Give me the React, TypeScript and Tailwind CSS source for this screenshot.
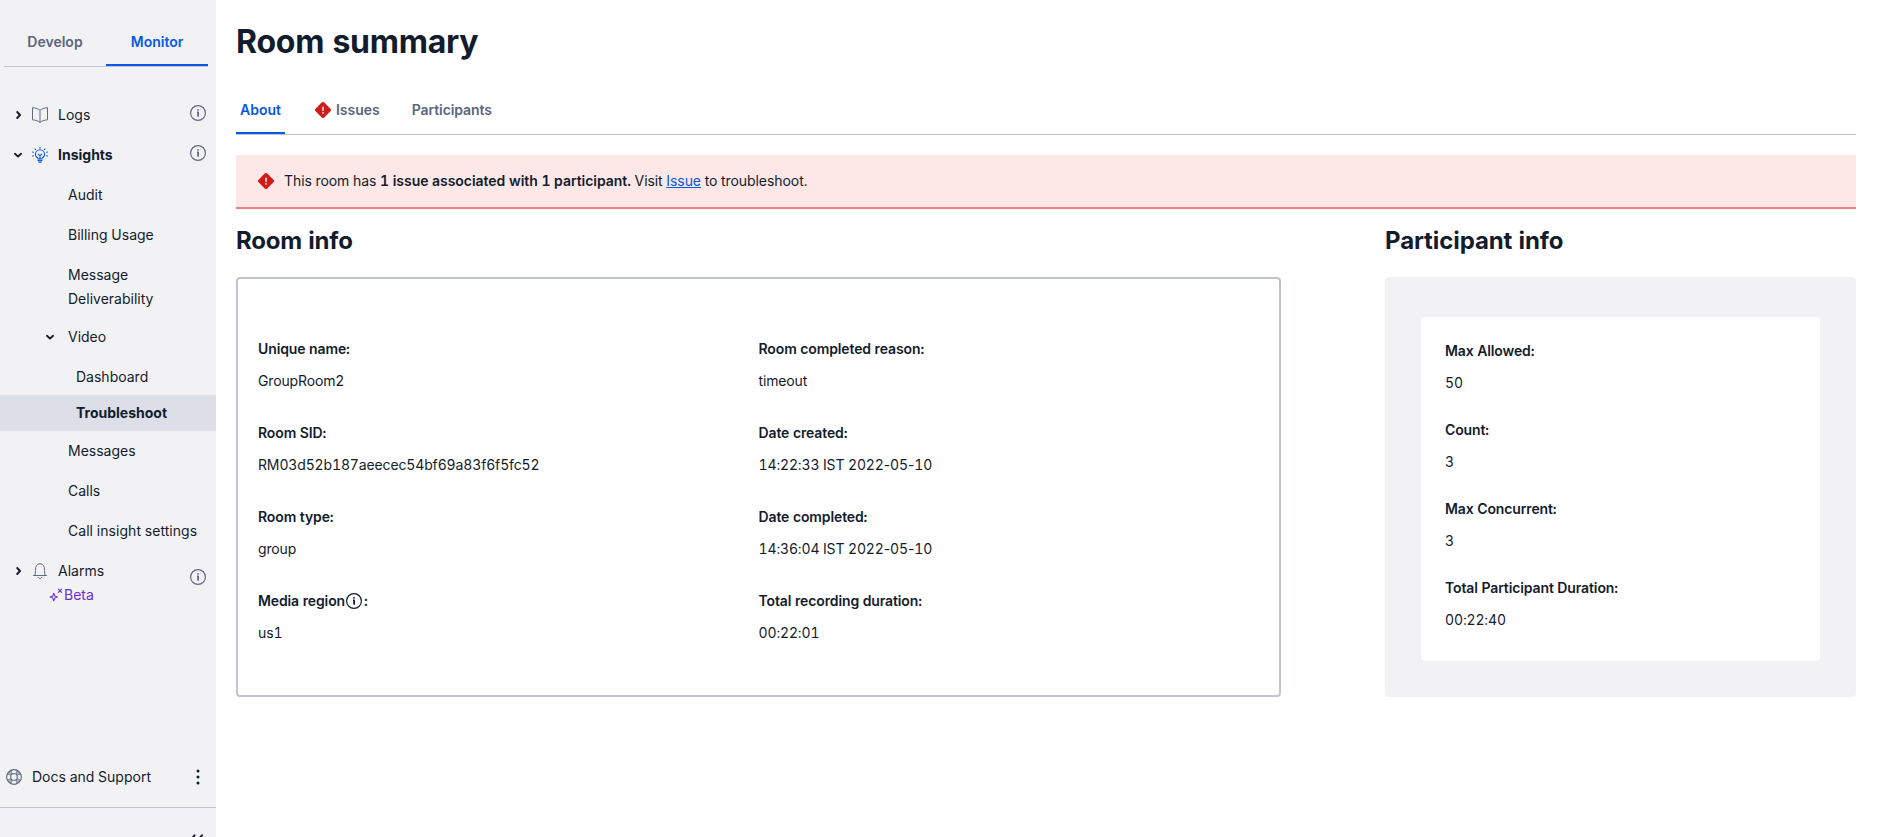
import React from "react";

type IconProps = { className?: string };

function InfoIcon({ className = "" }: IconProps) {
  return (
    <svg viewBox="0 0 16 16" className={`size-4 shrink-0 ${className}`} fill="none">
      <circle cx="8" cy="8" r="7.4" stroke="currentColor" strokeWidth="1.2" />
      <path d="M7 7.3h1.2V11.4" stroke="currentColor" strokeWidth="1.4" strokeLinejoin="round" />
      <path d="M8.2 7v4.5" stroke="currentColor" strokeWidth="1.5" />
      <circle cx="8" cy="4.9" r="0.9" fill="currentColor" />
    </svg>
  );
}

function ErrorIcon({ className = "" }: IconProps) {
  return (
    <svg viewBox="0 0 16 16" className={`size-4 shrink-0 ${className}`}>
      <path
        d="M6.7.6a1.9 1.9 0 0 1 2.6 0l6.1 6.1a1.9 1.9 0 0 1 0 2.6l-6.1 6.1a1.9 1.9 0 0 1-2.6 0L.6 9.3a1.9 1.9 0 0 1 0-2.6z"
        fill="#d01b1b"
      />
      <path d="M8 5.2v3.2" stroke="#fde8e7" strokeWidth="1.5" strokeLinecap="round" />
      <circle cx="8" cy="10.9" r="0.85" fill="#fde8e7" />
    </svg>
  );
}

function Chevron({ open }: { open?: boolean }) {
  return (
    <svg viewBox="0 0 10 10" className="size-2.5 shrink-0" fill="none" stroke="#121c2d" strokeWidth="1.9" strokeLinecap="round" strokeLinejoin="round">
      <path d={open ? "M2 3.8 5 6.6 8 3.8" : "M4.2 2 7 5 4.2 8"} />
    </svg>
  );
}

function BookIcon() {
  return (
    <svg viewBox="0 0 16 16" className="size-4 shrink-0" fill="none" stroke="#606b85" strokeWidth="1" strokeLinejoin="round">
      <path d="M8 3.4C6.6 1.9 3.6.9.5.6v12.2c3.1.3 6.1 1.2 7.5 2.7 1.4-1.5 4.4-2.4 7.5-2.7V.6C12.4.9 9.4 1.9 8 3.4zM8 3.4v12.1" />
    </svg>
  );
}

function BulbIcon() {
  return (
    <svg viewBox="0 0 16 16" className="size-4 shrink-0" fill="none" stroke="#0559e0" strokeWidth="1.1" strokeLinecap="round">
      <path d="M5.9 12V11C4.3 10.2 3.4 8.9 3.4 7.3a4.6 4.6 0 0 1 9.2 0c0 1.6-.9 2.9-2.5 3.7V12z" />
      <path d="M6 13.6h4M6.8 15.2h2.4M6.3 7.2 8 8.8l1.7-1.6M8 8.8V12" />
      <path d="M8 .5v.7M3 1.8l.6.7M13 1.8l-.6.7M.5 5l.8.2M15.5 5l-.8.2M.6 9l.8-.3M15.4 9l-.8-.3" />
    </svg>
  );
}

function BellIcon() {
  return (
    <svg viewBox="0 0 16 16" className="size-4 shrink-0" fill="none" stroke="#606b85" strokeWidth="1" strokeLinecap="round" strokeLinejoin="round">
      <path d="M1.5 12.5h13M2.9 12.3c.5-1.3.6-2.6.6-4.8C3.5 3.3 5 .8 8 .8s4.5 2.5 4.5 6.7c0 2.2.1 3.5.6 4.8M6.3 14.3c.2.8.9 1.2 1.7 1.2s1.5-.4 1.7-1.2" />
    </svg>
  );
}

function SparkleIcon() {
  return (
    <svg viewBox="0 0 14 14" className="size-3.5 shrink-0" fill="none" stroke="#6d2ed1" strokeWidth="1.1" strokeLinejoin="round" strokeLinecap="round">
      <path d="M4.8 5.2 5.8 8.1 8.3 9.1 5.8 10.1 4.8 12.8 3.8 10.1 1.1 9.1 3.8 8.1z" />
      <path d="M9.4 1.2l3.2 3.2M12.6 1.2 9.4 4.4" />
    </svg>
  );
}

function LifebuoyIcon() {
  return (
    <svg viewBox="0 0 16 16" className="size-4 shrink-0" fill="none" stroke="#5a6581" strokeWidth="1.1">
      <circle cx="8" cy="8" r="7.4" />
      <rect x="4.8" y="4.8" width="6.4" height="6.4" rx="2.2" />
      <path
        d="M3.2 3 5.2 1.4 6 5 5 6 1.4 5.200zM12.8 3 10.800 1.400 10 5l1 1 3.600-.8zM3.200 13l2 1.600L6 11l-1-1-3.600.8zM12.800 13l-2 1.600L10 11l1-1 3.600.8z"
        fill="#5a6581"
        fillOpacity="0.45"
        strokeWidth="0.6"
      />
    </svg>
  );
}

function Section({ icon, label, open, bold }: { icon: React.ReactNode; label: string; open?: boolean; bold?: boolean }) {
  return (
    <div className="flex h-10 items-center pr-[10px] pl-[13px]">
      <Chevron open={open} />
      <span className="ml-[9px] flex">{icon}</span>
      <span className={bold ? "ml-[10px] flex-1 font-bold" : "ml-[10px] flex-1"}>{label}</span>
      <InfoIcon className="mb-1 text-[#606b85]" />
    </div>
  );
}

function Item({ label }: { label: string }) {
  return <div className="w-[180px] py-2 pl-[68px]">{label}</div>;
}

// Digits are tabular, but hyphens keep their proportional width.
function Value({ text }: { text: string }) {
  return text.split("-").map((part, i) => (
    <React.Fragment key={i}>
      {i > 0 && <span className="normal-nums">-</span>}
      {part}
    </React.Fragment>
  ));
}

function Field({ label, value, info }: { label: string; value: string; info?: boolean }) {
  return (
    <div className="flex flex-col gap-3">
      <dt className="flex h-5 items-center font-semibold tracking-[-0.12px]">
        {label}
        {info && <InfoIcon className="mr-0.5 ml-px" />}
        {info ? <span>:</span> : null}
      </dt>
      <dd className="h-5 tracking-[-0.14px]">
        <Value text={value} />
      </dd>
    </div>
  );
}

const roomFields = [
  ["Unique name:", "GroupRoom2"],
  ["Room completed reason:", "timeout"],
  ["Room SID:", "RM03d52b187aeecec54bf69a83f6f5fc52"],
  ["Date created:", "14:22:33 IST 2022-05-10"],
  ["Room type:", "group"],
  ["Date completed:", "14:36:04 IST 2022-05-10"],
  ["Media region", "us1"],
  ["Total recording duration:", "00:22:01"],
];

const participantFields = [
  ["Max Allowed:", "50"],
  ["Count:", "3"],
  ["Max Concurrent:", "3"],
  ["Total Participant Duration:", "00:22:40"],
];

function Sidebar() {
  return (
    <aside className="flex h-full w-[216px] shrink-0 flex-col bg-[#f2f2f4] leading-6">
      <div className="mr-2 ml-1 flex h-[67px] border-b border-[#c1c4d6] text-center font-semibold">
        <div className="flex-1 pt-[30px] text-[#5a6581]">Develop</div>
        <div className="flex-1 border-b-2 border-[#0559e0] pt-[30px] text-[#0559e0]">Monitor</div>
      </div>
      <nav className="mt-7 flex-1">
        <Section icon={<BookIcon />} label="Logs" />
        <Section icon={<BulbIcon />} label="Insights" open bold />
        <Item label="Audit" />
        <Item label="Billing Usage" />
        <Item label="Message Deliverability" />
        <div className="flex h-9 items-center pl-[45px]">
          <Chevron open />
          <span className="ml-[13px]">Video</span>
        </div>
        <div className="mt-1 flex h-9 items-center pl-[76px]">Dashboard</div>
        <div className="flex h-9 items-center bg-[#dcdfe8] pl-[76px] font-bold">Troubleshoot</div>
        <Item label="Messages" />
        <Item label="Calls" />
        <div className="py-2 pl-[68px] tracking-[0.04px] whitespace-nowrap">Call insight settings</div>
        <div className="flex pt-2 pr-[10px] pl-[13px]">
          <div className="flex-1">
            <div className="flex h-6 items-center">
              <Chevron />
              <span className="ml-[9px] flex">
                <BellIcon />
              </span>
              <span className="ml-[10px]">Alarms</span>
            </div>
            <div className="flex h-6 items-center pl-9 text-[#6d2ed1]">
              <SparkleIcon />
              <span className="ml-px">Beta</span>
            </div>
          </div>
          <InfoIcon className="mt-2.5 text-[#606b85]" />
        </div>
      </nav>
      <div className="flex h-[61px] items-center border-b border-[#c1c4d6] pr-[10px] pl-1.5">
        <LifebuoyIcon />
        <span className="ml-2.5 flex-1">Docs and Support</span>
        <svg viewBox="0 0 16 16" className="size-4" fill="#121c2d">
          <circle cx="8" cy="2" r="1.5" />
          <circle cx="8" cy="8" r="1.5" />
          <circle cx="8" cy="14" r="1.5" />
        </svg>
      </div>
      <div className="flex h-[29px] shrink-0 justify-end overflow-hidden pt-[25px] pr-3">
        <svg viewBox="0 0 16 16" className="size-4 shrink-0" fill="none" stroke="#121c2d" strokeWidth="2" strokeLinecap="round">
          <path d="M6.5 2.3 2 8l5 5.5M14 2.3 9.5 8l5 5.5" />
        </svg>
      </div>
    </aside>
  );
}

export default function App() {
  return (
    <div className="flex h-[837px] overflow-hidden bg-white font-['Inter',sans-serif] text-sm text-[#121c2d] tabular-nums">
      <Sidebar />
      <main className="ml-5 w-[1620px]">
        <h1 className="pt-[22px] text-[32px] leading-10 font-bold tracking-[-0.25px]">Room summary</h1>
        <div className="mt-[28px] flex h-[45px] border-b border-[#c1c4d2] leading-5 font-semibold text-[#5a6581]">
          <div className="border-b-2 border-[#0559e0] px-1 pt-[10px] text-[#0559e0]">About</div>
          <div className="mt-[10px] ml-[30px] flex h-5 items-center gap-[5px]">
            <ErrorIcon />
            Issues
          </div>
          <div className="ml-8 pt-[10px] tracking-[-0.1px]">Participants</div>
        </div>
        <div className="mt-5 flex h-[54px] items-center border-b-2 border-[#f47f7f] bg-[#fde8e7] pl-[22px]">
          <ErrorIcon />
          <p className="ml-2.5 tracking-[-0.07px]">
            This room has{" "}
            <strong className="font-semibold tracking-[-0.05px]">1 issue associated with 1 participant.</strong> Visit{" "}
            <a className="text-[#0559e0] underline">Issue</a> to troubleshoot.
          </p>
        </div>
        <div className="mt-4 flex justify-between">
          <section className="w-[1045px]">
            <h2 className="text-2xl leading-8 font-bold tracking-[-0.2px]">Room info</h2>
            <dl className="mt-5 grid h-[420px] grid-cols-2 content-start gap-y-8 rounded border-2 border-[#c1c4d2] px-5 pt-[60px]">
              {roomFields.map(([label, value]) => (
                <Field key={label} label={label} value={value} info={label === "Media region"} />
              ))}
            </dl>
          </section>
          <section className="w-[471px]">
            <h2 className="text-2xl leading-8 font-bold tracking-[-0.1px]">Participant info</h2>
            <div className="mt-5 h-[420px] rounded bg-[#f2f2f4] px-9 pt-10">
              <dl className="flex h-[344px] flex-col gap-[27px] rounded bg-white px-6 pt-6">
                {participantFields.map(([label, value]) => (
                  <Field key={label} label={label} value={value} />
                ))}
              </dl>
            </div>
          </section>
        </div>
      </main>
    </div>
  );
}
